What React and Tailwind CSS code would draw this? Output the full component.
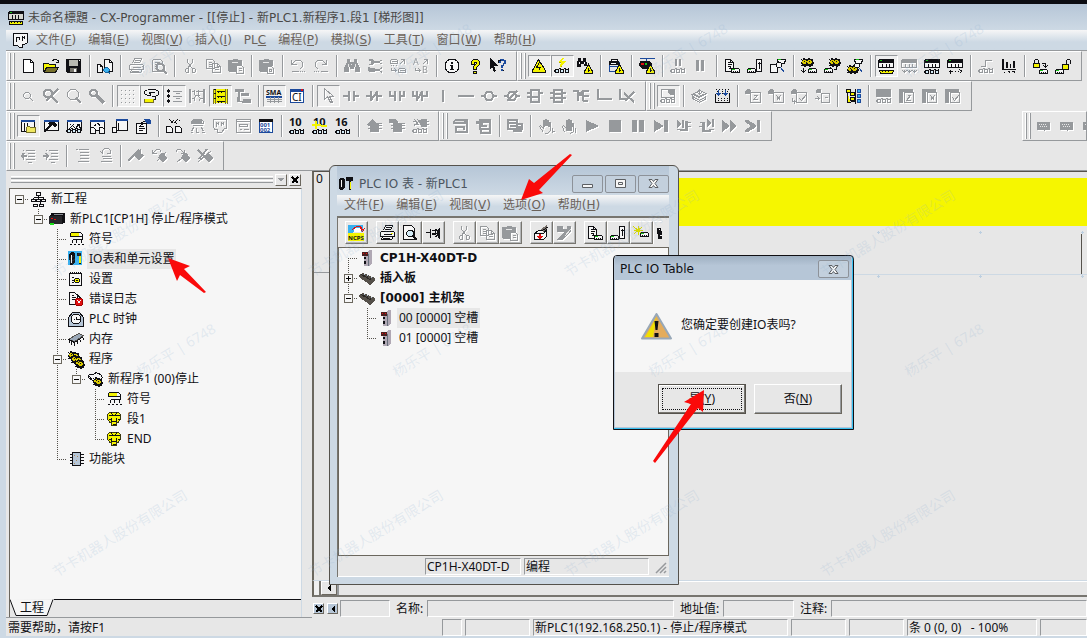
import React from 'react';
import clsx from 'clsx';

const G = '#96999c';
const K = '#101014';
const Y = '#f4f400';
const B = '#1c4a9c';
const C = '#38b0f0';
const R = '#e01010';
const W = '#f6f6f6';
const S = '#b6c6d7';

// icon parts: lines of one, two and three pixels, a filled area, a short caption
const line = (d, color = K, fill = 'none') => ({ type: 'line', d, color, fill });
const thick = (d, color = G, width = 2) => ({ type: 'thick', d, color, width });
const area = (d, color = K) => ({ type: 'area', d, color });
const label = (text, x, y, size, color = K, bold = false) => ({ type: 'label', text, x, y, size, color, bold });

// parts shared by several icons
const glasses = (c = K, y = 10) => [
  line(`M0 ${y + 3}v-1l1 -1M1 ${y + 1}h3v3h-3zM6 ${y + 1}h3v3h-3zM11 ${y + 1}h3v3h-3zM4 ${y}h2M9 ${y}h2M14 ${y}l1 1`, c, c === G ? 'none' : '#d4ecf8'),
];
const device = (x = 8, y = 10) => [
  line(`M${x} ${y + 1}l1 -1h6l1 1v3h-8z`, K, W),
  area(`M${x + 1} ${y + 1}h3v1h-3z`, '#18c018'),
  area(`M${x + 2} ${y + 3}h1v1h-1zM${x + 4} ${y + 3}h1v1h-1zM${x + 6} ${y + 3}h1v1h-1z`),
];
const warning = (x = 7, y = 6) => [
  line(`M${x + 4} ${y}l4 7v2h-8v-2z`, K, Y),
  line(`M${x + 4} ${y + 3}v4M${x + 3} ${y + 6}h2`),
];
const rack = (c = K) => [
  line('M0 4h15v5h-15zM4 5v3M8 5v3M11 5v3', c, c === G ? 'none' : W),
  area('M2 1h13l1 1v3h-16v-3z', c),
  area('M2 2h2v1h-2z', c === G ? G : '#18c018'),
];
const gear = (x, y) => [
  area(`M${x + 2} ${y}h2v1h2v1h1v2h1v2h-1v2h-2v1h-2v-1h-2v-2h-1v-2h1v-2h1z`),
  area(`M${x + 2} ${y + 2}h3v1h1v2h-1v1h-3v-1h-1v-2h1z`, '#d8c800'),
  area(`M${x + 3} ${y + 3}h1v1h-1zM${x} ${y + 1}h1v1h-1zM${x + 6} ${y + 1}h1v1h-1zM${x} ${y + 7}h1v1h-1z`),
];
const binoculars = (c = K) => [
  area('M3 1h3v3h4v-3h3v3l3 6v4h-5v-5h-1v2h-4v-2h-1v5h-5v-4l3 -6z', c),
  area('M4 6h1v3h-1zM11 6h1v3h-1zM7 6h1v1h-1z', c === G ? '#e7e7e7' : W),
];
const window1 = [line('M1 2h14v10h-14z', K, W), area('M1 2h15v2h-15z', B)];
const page = (c = K) => line('M1 1h5l3 3v9h-8zM6 1v3h3', c, c === G ? 'none' : W);
const stamp = [area('M0 6v-3l2 -2h2l2 2v3z', G), line('M5 4h10v10h-10z', G)];
const folderPage = [area('M0 1h4v14h-4z', G), area('M0 1h14v3h-14z', G), line('M5 4h9v10h-9z', G)];
const chip = [area('M4 5h9v9h-9zM2 7h2v1h-2zM2 10h2v1h-2zM13 7h3v1h-3zM13 10h3v1h-3zM13 5h3v1h-3z', G)];

const icons = {
  app: [
    line('M1 1h13l1 1v7h-15v-7z', K, '#d8d8d0'), area('M1 1h15v3h-15z'), area('M2 2h2v1h-2z', '#18c018'),
    line('M4 4v5M7 4v5M10 4v5'), line('M1 11h13v3h-13z', K, Y), area('M3 12h1v1h-1zM6 12h1v1h-1zM9 12h1v1h-1zM12 12h1v1h-1z'),
  ],
  section: [line('M1 1h14v9l-3 2h-2v3h-3l-2 -2h-4z', K, W), line('M4 4v5M7 4v3M10 3v5M12 3v3M4 5h3M10 5h2', K)],
  new: [line('M3 1h7l3 3v10h-10z', K, '#fff'), line('M10 1v3h3')],
  open: [
    line('M0 5h5l1 1h6v3h-9l-2 4h-1z', K, Y), line('M3 9h12l-3 5h-11z', K, '#77702a'), line('M9 2l2 -1h2l2 2M15 1v3h-3'),
  ],
  save: [area('M0 1h15v14h-14l-1 -1z'), area('M3 2h9v6h-9z', '#b8b8b0'), area('M4 10h7v4h-7z', '#77756c'), area('M8 11h2v3h-2z', W), area('M13 2h1v1h-1z', W)],
  compare: [
    line('M0 6h3l2 2v6h-5zM7 1h5l3 3v9h-8z', K, W), line('M3 6v2h2M12 1v3h3'),
    line('M8 9h2l2 2v1l-2 2h-2l-2 -2v-1z', '#16649c', C), line('M11 14l2 1', '#16649c'),
  ],
  print: [line('M4 5l2 -5h7l-2 5M6 2h5M5 4h6M2 6h12l1 1v4h-14v-4zM3 11l-1 3h10l2 -3M4 9h8M3 13h7M13 8h1', G)],
  preview: [line('M1 1h8l2 2v2M1 1v12h6M3 4h5M3 6h3M3 8h2M3 10h2', G), thick('M7 6h4l2 2v3l-2 2h-3l-2 -2v-3z'), thick('M12 12l4 4')],
  cut: [line('M5 0v4l5 6M10 0v4l-5 6M7 6h1M4 10h2v4h-2l-1 -1v-2zM10 10h2l1 1v2l-1 1h-2z', G)],
  copy: [line('M1 1h6l2 2v7h-8zM7 5h5l3 3v6h-8zM3 4h3M3 6h3M3 8h3M9 9h4M9 11h4M12 5v3h3', G)],
  paste: [area('M0 2h5v-1h5v1h4v5h-6v7h-7l-1 -1z', G), line('M8 7h5l2 2v6h-7zM10 10h3M10 12h3', G), area('M4 4h6v1h-6z', '#e7e7e7')],
  pasteSpecial: [area('M0 2h5v-1h5v1h4v6h-6v6h-7l-1 -1z', G), line('M8 8h4l2 2v5h-6zM10 11h2v2h-2z', G), area('M4 4h6v1h-6z', '#e7e7e7')],
  undo: [line('M1 1v5h5M1 6l4 -4h5l2 2v4l-3 3M1 13h7M9 13h1M11 13h1M13 13h1M2 5l3 -3', G)],
  redo: [line('M13 1v5h-5M13 6l-4 -4h-5l-2 2v4l3 3M0 13h1M2 13h1M4 13h1M7 13h7M12 5l-3 -3', G)],
  find: [binoculars(G)],
  // two wrenches lying over each other
  replaceTool: [area('M2 1h3l2 2h5l1 -1h2v1h-2v2h2v1h-2l-1 -1h-5l-2 2h-3v-1h2v-3h-2zM1 9h2v2h-2zM3 10h4l1 1h4l2 -2h1v2h-2v2h2v2h-1l-2 -2h-4l-1 1h-5l-1 -1v-2z', G)],
  swapDevice: [line('M0 2l1 -1h5l1 1v3h-7zM1 3h5M1 6v1M3 6v1M6 6v1M9 6l5 -5M10 1h4v4M8 11l1 -1h5l1 1v3h-7zM9 12h5M1 9v3h5M4 10l2 2l-2 2', G)],
  swapLetters: [label('A', 0, 7, 9, G), label('B', 9, 15, 9, G), line('M9 6l5 -5M10 1h4v4M2 9v3h5M5 10l2 2l-2 2', G)],
  info: [{ type: 'circle', cx: 8, cy: 8, r: 7, color: K }, area('M7 4h2v2h-2zM6 7h3v4h1v1h-4v-1h1v-3h-1z')],
  help: [line('M4 3l2 -2h4l2 2v3l-3 3v2h-3v-3l3 -3v-1h-2v2h-3zM6 13h3v2h-3z', K, Y)],
  whatsThis: [area('M0 0l8 8h-4l2 5l-2 1l-2 -5l-2 2z'), area('M8 2h2v-1h4v1h2v4h-2v2h-1v2h-2v-3h2v-2h1v-2h-3v2h-3zM11 11h2v2h-2z', B), line('M8 4v-2h2M12 12h1')],
  alarm: [line('M7 1l7 11v2h-13v-2z', K, Y), line('M8 4l-3 5h4l-2 3')],
  monitor: [line('M9 0l-4 4h4l-3 5', '#b0a800'), area('M8 0h2l-2 3h4l-6 6l1 -5h-3z', Y), glasses()],
  findAlarm: [area('M1 0h3v3h2v-3h3v3l2 5h-4v-2h-3v3h-4v-3z'), area('M2 4h1v2h-1zM7 4h1v2h-1z', W), warning()],
  printAlarm: [line('M3 1h6v3h-6z', K, W), line('M1 4h10v4h-10zM1 8v5h5', B), area('M1 3h10v4h-10z'), area('M3 5h5v1h-5z', W), warning()],
  plcAlarm: [line('M0 0h15M7 0v3', B), area('M1 3h10l2 3v5h-9l-4 -3z'), area('M2 5h3v2h-3z', R), area('M6 5h2v2h-2z', '#18c018'), warning()],
  pauseMonitor: [area('M5 1h2v7h-2zM9 1h2v7h-2z', G), glasses(G)],
  pause: [area('M3 2h3v11h-3zM8 2h3v11h-3z', G)],
  download: [page(), line('M3 4h2M3 6h4M3 8h3M4 10h3M6 9l3 2', K), device(7, 10)],
  upload: [line('M9 1h5v12h-5zM12 10v-6M10 6l2 -2l2 2', K, W), device(0, 10)],
  comparePlc: [line('M0 6h7v8h-7z', K, W), line('M7 1h8l-1 4h-6z', K, W), area('M8 1h3v1h-3z', '#18c018'), line('M7 4h3l1 1v3l-1 1h-3l-1 -1v-3z', K, W), line('M10 9l4 5', B)],
  toPlc: [gear(0, 0), gear(5, 0), line('M2 9v5M0 12l2 2l2 -2'), device(7, 10)],
  fromPlc: [gear(5, 0), gear(9, 0), line('M12 8v3h-3M6 9l-3 3'), device(0, 10)],
  plcCheck: [gear(0, 7), gear(4, 7), line('M7 1h8l-1 4h-6z', K, W), area('M9 1h3v1h-3z', '#18c018'), line('M8 5h3l1 1v2l-1 1h-3l-1 -1v-2z', K, W), line('M12 10l3 4', B)],
  rackEdit: [rack(), line('M1 12h14l-1 3h-12z', K, Y), area('M4 13h1v1h-1zM7 13h1v1h-1zM10 13h1v1h-1z')],
  rackDown: [rack(G), line('M3 11v3M1 12l2 2l2 -2M8 11v3M6 12l2 2l2 -2M13 11v3M11 12l2 2l2 -2', G)],
  rackMonitor: [rack(), glasses(K, 11)],
  rackArrow: [rack(), line('M1 13h4M3 11v4M7 13h1M10 13h1M12 11l2 2l-2 2M14 11v2')],
  step: [line('M2 8h5v-6h6', G), glasses(G)],
  wave: [area('M1 1h2v11h-2zM5 4h2v6h-2zM9 6h1v4h-1zM12 3h2v7h-2z'), line('M1 11h13M3 13v1M6 13h2v1M10 13h3v1')],
  lock: [line('M1 5h6v4h-6z', K, Y), line('M2 5v-3l1 -1h2l1 1v3M9 5h4v4M11 7l2 2l2 -2'), device(7, 11)],
  unlock: [line('M7 6h6v5h-6z', K, Y), line('M11 5v-3l1 -1h2l1 1v3'), device(0, 11)],

  zoomMini: [line('M5 4h3l2 2v2l-2 2h-3l-2 -2v-2zM9 9l4 4', G)],
  zoomCut: [thick('M3 2h4l2 2v3l-2 2h-4l-2 -2v-3z'), thick('M15 1l-12 12'), thick('M8 8l7 7')],
  zoomIn: [line('M4 1h5l3 3v4l-3 3h-5l-3 -3v-4z', G), thick('M10 10l5 5')],
  zoomFit: [thick('M3 2h3l2 2v2l-2 2h-3l-2 -2v-2z'), thick('M8 8l7 7', G, 3)],
  grid: [area([2, 6, 10, 14].map((y) => [1, 5, 9, 13].map((x) => `M${x} ${y}h1v1h-1z`).join('')).join(''), G)],
  comment: [line('M4 1h8l3 2v3l-3 2h-4M4 1l-3 2v2l3 2h3v-2h-2M12 8v3h-2M5 4h6', K, 'none'), area('M1 11h10v4h-10z', '#77702a'), area('M2 11h8v3h-8z', Y)],
  list: [area('M1 2h3v2h-3zM2 1h1v4h-1zM1 7h3v2h-3zM2 6h1v4h-1zM1 12h3v2h-3zM2 11h1v4h-1z'), line('M6 3h9M6 8h9M6 13h9M9 5h4M9 10h4', G)],
  rungs: [line('M0 0v14M1 0v14M14 0v14M15 0v14M2 3h3M5 1v5M9 1v5M9 3h5M6 3h2M2 10h3M6 8l-2 2l2 3M9 8l2 2l-2 3M11 10h3M5 7h5', G)],
  ladder: [area('M1 1h15v14h-15z', Y), line('M1 0v15M3 0v15M13 0v15M15 0v15', '#77702a'), line('M4 3h8M4 8h8M4 13h8M1 1h2M1 5h2M1 10h2'), line('M6 2v2M9 2v2M6 7v2M9 7v2M6 12v2M9 12v2')],
  outline: [area('M0 1h9v3h-9zM3 4h2v9h3v-2h8v4h-9v-1h-5zM6 5h8v3h-8z', G)],
  sma: [label('SMA', 0, 7, 7, K, true), area('M0 8h16v2h-16z', B), line('M0 11h15M0 13h15M4 8v6M8 8v6M12 8v6', G)],
  ci: [line('M1 1h13v13h-13z', B, '#fff'), area('M1 1h14v3h-14z', B), area('M12 1h2v2h-2z', R), label('CI', 3, 13, 10, K)],
  pointer: [line('M4 0v11l3 -3l3 6h2l-3 -6h4z', G)],
  contact: [thick('M0 8h5M6 3v10M11 3v10M11 8h5')],
  contactNot: [thick('M0 8h5M5 3v10M11 3v10M11 8h5'), thick('M11 4l-6 8')],
  contactOr: [thick('M1 3v5h4M6 3v10M11 3v10M15 3v5h-4')],
  contactOrNot: [thick('M1 3v5h4M5 3v10M10 3v10M15 3v5h-4'), thick('M10 4l-5 8')],
  vertical: [area('M7 2h2v12h-2z', G)],
  horizontal: [area('M0 7h16v2h-16z', G)],
  coil: [thick('M0 8h3l3 -4h4l3 4h3M3 8l3 4h4l3 -4')],
  coilNot: [thick('M0 8h3l3 -4h4l3 4h3M3 8l3 4h4l3 -4'), thick('M13 3l-10 10')],
  block: [thick('M4 2h8v12h-8zM0 5h4M12 5h4M4 9h8M0 9h4')],
  blockPins: [thick('M4 2h8v12h-8zM0 5h4M12 5h4M0 10h4M12 10h4M4 6h8M4 10h8')],
  branch: [thick('M0 3h5v10M5 8l5 -5M10 3v10M10 3h6M10 8h6M10 13h5M5 4l4 4')],
  corner: [thick('M2 1v10h14')],
  cornerCut: [thick('M1 1v10h8'), thick('M15 4l-9 9'), thick('M5 5l10 9')],
  monitorWindow: [line('M1 1h13v8h-13z', G), area('M8 2h6v5h-3l-3 -2z', G), glasses(G)],
  layers: [line('M1 6l7 -4l7 3l-7 4zM1 8l7 4l7 -4M1 10l7 4l7 -4M8 0v6M6 4l2 2l2 -2M1 6v4M3 6l5 2l5 -3', G)],
  compile: [line('M1 5v9h14v-9'), line('M1 1h1M4 1h1M7 1h1M10 1h1M13 1h1M2 3h1M7 3h1M12 3h1M1 5h1M7 5h1M14 5h1', K), area('M4 2h1v3h-1zM11 2h1v3h-1zM2 5h5l-2 3h-1zM9 5h5l-2 3h-1z', B), line('M3 10h1M6 10h1M9 10h1M12 10h1M3 12h1M6 12h1M9 12h1M12 12h1')],
  stampZ: [stamp, line('M8 7h4l-4 4h4', G)],
  stampX: [stamp, line('M8 7l4 5M12 7l-4 5', G)],
  stampCheck: [stamp, line('M8 10l2 2l4 -5M1 9v4h3M3 11v4', G)],
  stampArrow: [area('M2 5v-3l2 -1h2l1 1v3z', G), line('M7 5h8v9h-8zM0 10h5M3 8l2 2l-2 2M10 9h3', G)],
  map: [line('M1 1h4v3h-4zM2 4v10h3M5 4h4v3h-4zM5 9h4v3h-4zM5 13h4', K, Y), line('M10 0v15'), line('M12 1h3v3h-3zM12 6h3v3h-3zM12 11h3v3h-3z', B, C)],
  screenMonitor: [area('M0 1h15v8h-15z', G), glasses(G)],
  folderZ: [folderPage, line('M8 7h3l-4 5h4', G)],
  folderX: [folderPage, line('M8 7l4 5M12 7l-4 5', G)],
  folderCheck: [folderPage, line('M7 9l2 3l4 -5', G)],

  workspace: [line('M1 2h13v11h-13z', K, W), area('M1 2h14v2h-14z', B), line('M4 4v9M7 4v3'), line('M6 9l1 -1h2l1 1h5v5h-9z', '#77702a', '#f0e860')],
  output: [window1, area('M4 5l3 -1h4l3 3l-2 2l-3 -2l-6 7h-2v-2l5 -5z')],
  watch: [window1, line('M3 6h1M6 6h1M10 6h1M12 6h1M2 11l4 -4l3 3l3 -4l2 4'), glasses()],
  crossRef: [window1, line('M1 9h3l2 2v4h-5zM10 9h3l2 2v4h-5z', K, W), line('M5 7l2 -1M9 6l2 1M7 5h2')],
  local: [line('M4 1h11v11h-11z', K, W), area('M4 1h12v2h-12z', B), line('M0 9h4v5h-4z', K, W), line('M6 4v7')],
  properties: [line('M1 5h10v10h-10z', K, W), line('M3 8h5M3 10h6M3 12h4M5 5l5 -3l4 2'), area('M9 1h5l2 2v3h-4z', B), line('M5 7l4 -3')],
  crossTool: [line('M0 8h4l2 2v4h-6zM9 8h4l2 2v4h-6z', K, W), line('M4 5l3 -3M7 5l4 -4M4 2l3 3M9 4l2 2M2 1h1M12 2h1')],
  plcTree: [line('M2 3l2 -2h8l2 2v2h-12zM3 7h10M4 9l-2 4M7 9v4M12 9l2 4', G), area('M3 2h10v3h-10z', G), line('M1 14h2M6 14h3M12 14h3', G)],
  ladderView: [line('M1 1h13v9h-2l-3 4h-4v-3h-3l-1 -3zM4 3v5M6 3v3M9 3v4M11 3v3M4 5h2M9 5h2', G)],
  formView: [line('M1 1h14v13h-14zM1 3h14M4 6h8v2h-8zM4 11h2M8 11h5', G)],
  address: [line('M1 1h13v13h-13z', B, '#fff'), area('M1 1h14v3h-14z'), label('001', 2, 9, 6, B, true), label('002', 2, 14, 6, B, true)],
  ten: [label('10', 0, 8, 11, K, true), glasses(K, 11)],
  tenSigned: [label('10', 1, 8, 11, K, true), area('M0 6h9v2h-9zM3 3h2v8h-2zM9 7h6v2h-6z', Y), glasses(K, 11)],
  sixteen: [label('16', 0, 8, 11, K, true), glasses(K, 11)],
  chipUp: [chip, area('M0 7l6 -6l6 6z', G)],
  chipDown: [chip, area('M0 1h6l3 3v3h2l-4 4l-4 -4h2l-2 -2h-3z', G)],
  chipMonitor: [line('M2 1l5 6M5 1l4 5M9 1h5v7h-5zM0 3h3M1 6h4M14 3h2M14 6h2M1 8l3 -3', G), area('M7 2h7v6h-5z', G), glasses(G)],
  trace: [area('M2 1h12l1 1v4h-15v-3z', G), area('M2 3h9v1h-9z', '#e7e7e7'), thick('M14 5v9h-11v-5h8v3')],
  traceStack: [area('M3 1h12v2h-12zM0 3h4v3h-4z', G), thick('M4 3v8h10v-7h-8v4h5M5 11v4h9v-4')],
  transfer: [thick('M1 2h9v9h-9zM1 5h9M3 8h6'), thick('M10 6h5v6M6 13h9'), area('M11 8h4v5h-4z', G)],
  hand: [line('M5 14l-4 -6l1 -1l3 3v-8h1v6M7 7v-6h1v6M9 7v-5h1v6M11 8v-4h1v8l-3 3h-3M14 9v5M13 13h3', G)],
  handStop: [line('M3 14l-2 -6l1 -1l3 3v-8h1v6M7 7v-6h1v6M9 7v-5h1v6M11 8v-3h1v8l-3 2M14 9v5', G), area('M5 6h6v7h-6z', G)],
  play: [area('M2 2l13 6l-13 6z', G)],
  stop: [area('M2 2h12v12h-12z', G)],
  pauseBig: [area('M2 2h5v12h-5zM9 2h5v12h-5z', G)],
  stepNext: [area('M1 2l10 6l-10 6zM11 2h4v12h-4z', G)],
  stepIn: [area('M1 2l4 4l-4 4zM6 2h2v8h-2zM9 3h3v10h-8v-2h5zM12 4h3v1h-3zM12 8h3v1h-3zM1 11h3v1h-3z', G)],
  stepOut: [area('M1 4h5v8h6v2h-9v-9h-2zM8 1l4 4l-4 4zM13 1h2v8h-2zM0 8h3v1h-3zM10 11h5v1h-5z', G)],
  fast: [area('M0 2l8 6l-8 6zM8 2l7 6l-7 6z', G)],
  scanEnd: [area('M0 2h3l8 5v2l-8 5h-3v-2l6 -4l-6 -4zM12 2h3v12h-3z', G)],
  dither: [area('M1 4h13v8h-5l-1 1l-1 -1h-6z', G), area('M3 6h1v1h-1zM5 6h1v1h-1zM7 6h1v1h-1zM9 6h1v1h-1zM4 8h1v1h-1zM6 8h1v1h-1zM8 8h1v1h-1zM10 8h1v1h-1z', '#e7e7e7')],
  outdent: [line('M5 2h9M7 5h7M7 8h7M5 11h9M7 14h4M2 2h1M1 5h3M2 11h1', G), area('M0 8l4 -3v2h3v2h-3v2z', G)],
  indent: [line('M5 2h9M7 5h7M7 8h7M5 11h9M7 14h4M2 2h1M1 5h2M2 11h1', G), area('M7 8l-4 -3v2h-3v2h3v2z', G)],
  format: [line('M1 1h2M4 1h10M5 4h9M5 7h9M5 10h9M3 13h11', G)],
  unformat: [line('M5 5l-2 -2M5 5v-3l2 -2h4l2 2v3h-4M4 8h9M5 10h9M3 13h11', G)],
  flag: [thick('M0 13l11 -11'), area('M6 6l7 -5v5l3 1l-5 6l-3 -3z', G)],
  flagPrev: [line('M1 1v4h4M1 5l4 -4h3l2 3M5 13l9 -9', G), area('M10 5h3l3 5l-4 4l-5 -4z', G)],
  flagNext: [line('M10 1v4h-4M10 5l-4 -4h-3l-2 3M3 13l9 -7', G), area('M10 5h3l3 5l-4 4l-5 -4z', G)],
  flagClear: [thick('M1 2l9 9'), thick('M10 1l-8 10'), line('M1 13l13 -11', G), area('M10 6h3l3 4l-4 4l-5 -4z', G)],

  ncps: [area('M0 0h5v16h-5zM5 0h10v7h-10z', C), area('M6 3h7v4h-7z', '#fff'), line('M4 4l4 -3h4l2 4M12 3l2 3l2 -3', R), area('M0 8h16v8h-16z', Y), label('NCPS', 0, 15, 6, K, true)],
  printOn: [line('M4 5l2 -5h7l-2 5M6 2h5M5 4h6M2 6h12l1 1v4h-14v-4zM3 11l-1 3h10l2 -3M4 9h8M3 13h7', K, W), area('M12 8h2v1h-2z', Y)],
  previewOn: [line('M1 0h8l3 3v11h-11z', K, W), line('M6 5h4l1 2v2l-1 2h-4l-2 -2v-2z', K, '#d4ecf8'), thick('M11 11l4 4', K)],
  pin: [line('M0 7h5M5 3v9M6 5h4v4h-4M10 4l2 1v5l-2 1M14 2v11M12 6h2M6 8h5M13 3v9')],
  toUnit: [line('M1 8h9l3 -4v7l-3 3h-9zM1 8l4 -3h8', K, W), area('M8 4l6 -4l1 3l-5 4z', '#77706a'), line('M9 5l6 -4'), area('M6 9h2v2h2l-3 4l-3 -4h2z', R)],
  wrench: [area('M1 1h6v3h4v-3h4v5l-9 9h-5l7 -8h-7z', G), line('M8 11l6 -7', '#e7e7e7')],
  newDevice: [line('M0 1l9 8M5 0v9M9 1l-8 7M0 5h9', '#d8d800'), device(7, 7)],
  moreDevice: [area('M0 3h4v3h3v8h-6v-5h-1z'), area('M2 4h1v1h-1zM3 10h3v1h-3z', W)],

  network: [line('M6 1h4v3h-4zM8 4v2M3 6h10M3 6v2M13 6v2M1 8h4v2h-4zM11 8h4v2h-4zM6 8h4v2h-4zM8 6v2M5 12v1M10 10v3M3 13h4v2h-4zM9 13h4v2h-4z', K, W)],
  plc: [line('M2 2h13v9h-13z', K, K), area('M0 5h13v8h-13z', '#26262a'), line('M0 5l3 -3h12v8l-3 3'), line('M4 3h9', '#8a8e94'), area('M2 7h2v1h-2zM5 8h2v1h-2z', R), area('M1 12h4v2h-4z', '#18e018')],
  symbols: [line('M2 2l2 -1h8l2 2v2h-12zM4 8h9v3M4 8v3M8 8v3M1 13h2M5 13h2M9 13h2M13 13h2', K, W), area('M3 2h8v3h-8z', Y), line('M14 5v3')],
  ioTable: [area('M0 0h14v14h-14z', C), area('M1 3l2 -2h3l1 2v8l-2 3h-3z', K), area('M3 4h1v8h-1z', W), area('M9 2h4v11h-2v-8h-2z', K), area('M11 5h2v7h-2z', Y)],
  settings: [line('M1 2h12v12h-12z', K, W), line('M2 0v2M4 0v2M6 0v2M8 0v2M10 0v2M12 0v2M3 6h2M3 9h2M3 11h2'), line('M7 7h3l1 1v2l-1 1h-3l-1 -1v-2z', K, Y), area('M8 9h2v1h-2z')],
  errorLog: [line('M1 1h5l3 3v9h-8z', K, W), line('M3 4h2M3 6h4M3 8h3M9 3l4 5'), { type: 'circle', cx: 11, cy: 11, r: 4, color: '#a00000', fill: R }, line('M9 9l3 3M12 9l-3 3', W)],
  clock: [line('M0 15v-9l4 -5h7l4 5v9z', K, S), { type: 'circle', cx: 8, cy: 8, r: 5, color: K, fill: W }, line('M8 5v3h3M5 8h1M8 11v1')],
  memory: [line('M0 8l10 -6l5 2l-9 6z', '#55524c', '#9aa8b8'), line('M1 9v2M3 10v3M6 11v3M9 9v3M12 8v2M15 6v2M0 8l6 3l9 -6')],
  gears: [gear(0, 0), gear(4, 1), gear(3, 4), gear(7, 5), gear(7, 8), gear(9, 9), line('M5 3h1M8 8h1M11 11h1', Y)],
  program: [line('M2 3h4l2 -2l5 2l2 3l-3 3h-7l-4 -3v-2z', K, W), gear(6, 6), gear(8, 7), line('M0 5h2M4 8l-1 -2M12 1v2M8 0v2')],
  steps: [line('M1 3l2 -2h9l2 2v5l-2 2v1h-2v3h-5v-3h-2v-1l-2 -2z', '#3c3810', Y), line('M2 4h11M5 1l1 3M10 1l-1 3M5 6v4h5v-4M6 13h3M2 8h2M11 8h2')],
  block2: [line('M4 1h8v13h-8z', K, S), line('M1 3h3M1 6h3M1 9h3M1 12h3M12 3h3M12 6h3M12 9h3M12 12h3'), area('M6 4h1v1h-1zM9 5h1v1h-1zM8 9h1v1h-1zM6 12h1v1h-1z', '#b08858')],
  unit: [area('M3 2h5l2 -2h3v13l-3 3h-5v-10h-2z', '#b0a8b4'), area('M3 2h6v4h-6z', '#4a2020'), area('M4 3h1v1h-1zM7 3h1v1h-1z', R), area('M5 7h2v2h-2zM5 11h2v3h-2z'), line('M9 3v12', '#66707c')],
  board: [area('M0 5l4 -2l12 5v3l-5 4l-11 -8z', '#55504a'), line('M2 4l10 6M5 5l-1 2M8 6l-1 2M11 8l-1 2', '#2a2826'), area('M5 4h1v1h-1zM8 5h1v1h-1zM12 7h1v1h-1z', S)],
  ioWindow: [
    area('M1 3l2 -1h3l1 2v7l-2 3h-3l-1 -3z'), area('M3 4h1v7h-1z', W), area('M8 1h7v4h-2v9h-2v-9h-3z'), area('M12 6h1v7h-1z', Y),
  ],
};

const menus = [['文件', 'F'], ['编辑', 'E'], ['视图', 'V'], ['插入', 'I'], ['PL', 'C'], ['编程', 'P'], ['模拟', 'S'], ['工具', 'T'], ['窗口', 'W'], ['帮助', 'H']];
const ioMenus = [['文件', 'F'], ['编辑', 'E'], ['视图', 'V'], ['选项', 'O'], ['帮助', 'H']];

// "|" is a separator, a leading "*" is a pressed button
const toolbars = [
  [
    'new open save | compare | print preview | cut copy paste | pasteSpecial | undo redo | find replaceTool swapDevice swapLetters | info help whatsThis',
    '*alarm *monitor findAlarm | printAlarm | plcAlarm | pauseMonitor pause | download upload comparePlc | toPlc fromPlc plcCheck | *rackEdit rackDown rackMonitor rackArrow | step wave | lock unlock',
  ],
  [
    'zoomMini zoomCut zoomIn zoomFit | *grid *comment *list rungs *ladder outline | *sma ci | *pointer contact contactNot contactOr contactOrNot vertical horizontal coil coilNot block blockPins branch corner cornerCut',
    '*monitorWindow | layers compile | stampZ stampX stampCheck stampArrow | map | screenMonitor folderZ folderX folderCheck',
  ],
  [
    '*workspace output watch crossRef local properties | crossTool plcTree ladderView formView address | ten tenSigned sixteen | chipUp chipDown chipMonitor',
    'trace traceStack | transfer | hand handStop play stop pauseBig stepNext stepIn stepOut fast scanEnd',
  ],
  ['outdent indent | format unformat | flag flagPrev flagNext flagClear'],
];

const ioToolbar = [['ncps'], ['printOn', 'previewOn', 'pin'], ['cut', 'copy', 'paste'], ['toUnit', 'wrench'], ['download', 'upload', 'newDevice']];

// one character per column: space, | line through, T tee, L last, F first;
// boxes: a top, b no line below, - and + line on both sides
const projectTree = [
  { cols: 'a', icon: 'network', text: '新工程' },
  { cols: ' b', icon: 'plc', text: '新PLC1[CP1H] 停止/程序模式' },
  { cols: '  T', icon: 'symbols', text: '符号' },
  { cols: '  T', icon: 'ioTable', text: 'IO表和单元设置', selected: true },
  { cols: '  T', icon: 'settings', text: '设置' },
  { cols: '  T', icon: 'errorLog', text: '错误日志' },
  { cols: '  T', icon: 'clock', text: 'PLC 时钟' },
  { cols: '  T', icon: 'memory', text: '内存' },
  { cols: '  -', icon: 'gears', text: '程序' },
  { cols: '  |b', icon: 'program', text: '新程序1 (00)停止' },
  { cols: '  | T', icon: 'symbols', text: '符号' },
  { cols: '  | T', icon: 'steps', text: '段1' },
  { cols: '  | L', icon: 'steps', text: 'END' },
  { cols: '  L', icon: 'block2', text: '功能块' },
];

const ioTree = [
  { cols: 'F', icon: 'unit', text: 'CP1H-X40DT-D', bold: true },
  { cols: '+', icon: 'board', text: '插入板', bold: true },
  { cols: 'b', icon: 'board', text: '[0000] 主机架', bold: true },
  { cols: ' T', icon: 'unit', text: '00 [0000] 空槽', selected: true },
  { cols: ' L', icon: 'unit', text: '01 [0000] 空槽' },
];

const marks = [0, 1, 2, 3].flatMap((n) => [
  { x: 58 + n * 256, y: 268, text: '节卡机器人股份有限公司' },
  { x: 58 + n * 256, y: 568, text: '节卡机器人股份有限公司' },
  { x: 142 + n * 256, y: 68, text: '杨乐平 | 6748' },
  { x: 142 + n * 256, y: 368, text: '杨乐平 | 6748' },
]);

const Icon = ({ name, className }) => {
  const parts = icons[name].flat();
  const dim = parts.every((p) => p.color === G || p.color === '#e7e7e7');
  return (
    <svg
      viewBox="0 0 16 16"
      shapeRendering="crispEdges"
      aria-hidden="true"
      className={clsx('h-4 w-4 shrink-0 overflow-visible', dim && 'drop-shadow-[1px_1px_0_#ffffff]', className)}
    >
      {parts.map((p, i) => {
        if (p.type === 'line') return <path key={i} d={p.d} stroke={p.color} fill={p.fill} transform="translate(.5 .5)" />;
        if (p.type === 'thick') return <path key={i} d={p.d} stroke={p.color} fill="none" strokeWidth={p.width} />;
        if (p.type === 'area') return <path key={i} d={p.d} fill={p.color} />;
        if (p.type === 'circle') return <circle key={i} cx={p.cx} cy={p.cy} r={p.r} stroke={p.color} fill={p.fill || W} />;
        return (
          <text key={i} x={p.x} y={p.y} fontSize={p.size} fill={p.color} fontWeight={p.bold ? 700 : 400}>
            {p.text}
          </text>
        );
      })}
    </svg>
  );
};

const Menu = ({ items, className }) => (
  <nav className={clsx("flex items-center font-['DejaVu_Sans','Noto_Sans_CJK_SC',sans-serif] text-[#6b625a]", className)}>
    {items.map(([name, key]) => (
      <button key={name} className="px-[6px] whitespace-nowrap">
        {name}
        {name === 'PL' ? <u>{key}</u> : <>(<u>{key}</u>)</>}
      </button>
    ))}
  </nav>
);

const Gripper = () => (
  <div className="flex w-[10px] shrink-0 gap-[2px] py-px pl-[2px]">
    <div className="w-[2px] border-r border-[#96999c] bg-white" />
    <div className="w-[2px] border-r border-[#96999c] bg-white" />
  </div>
);

const Toolbar = ({ items, className }) => (
  <div role="toolbar" className={clsx('flex h-[30px] shrink-0 overflow-hidden border border-t-white border-r-[#96999c] border-b-[#96999c] border-l-white pr-[6px]', className)}>
    <Gripper />
    <div className="flex items-center">
      {items.split(' ').map((item, i) => {
        if (item === '|') return <div key={i} className="mx-[3px] h-[22px] w-[2px] border-l border-[#96999c] bg-white" />;
        const pressed = item[0] === '*';
        const name = pressed ? item.slice(1) : item;
        return (
          <button
            key={i}
            aria-label={name}
            className={clsx(
              'flex h-[22px] w-[23px] items-center justify-center border pr-px',
              pressed ? 'border-t-[#96999c] border-r-white border-b-white border-l-[#96999c] bg-[#efefef]' : 'border-transparent'
            )}
          >
            <Icon name={name} />
          </button>
        );
      })}
    </div>
  </div>
);

const Branch = ({ kind }) => {
  const up = '|TLb-+'.includes(kind);
  const down = '|TF-+'.includes(kind);
  const right = 'TLFab-+'.includes(kind);
  const box = 'ab-+'.includes(kind);
  return (
    <svg viewBox="0 0 19 20" className="h-5 w-[19px] shrink-0" shapeRendering="crispEdges" aria-hidden="true">
      {kind !== ' ' && (
        <g stroke="#55524c" fill="none" strokeDasharray="1 1">
          {up && <path d="M9.5 0v10" />}
          {down && <path d="M9.5 10v10" />}
          {right && <path d="M9 10.5h10" />}
        </g>
      )}
      {box && (
        <g stroke="#6b675e">
          <path d="M5.5 6.5h8v8h-8z" fill="#f6f6f6" />
          <path d={kind === '+' ? 'M7 10.5h5M9.5 8v5' : 'M7 10.5h5'} stroke="#000" />
        </g>
      )}
    </svg>
  );
};

const Tree = ({ rows }) => (
  <ul>
    {rows.map((row, i) => (
      <li key={i} className="flex h-5 items-center">
        {row.cols.split('').map((kind, n) => <Branch key={n} kind={kind} />)}
        <Icon name={row.icon} className="mr-[3px] ml-px" />
        <span
          className={clsx(
            'h-5 px-[2px] leading-5 whitespace-nowrap',
            row.bold && "font-['DejaVu_Sans','Noto_Sans_CJK_SC',sans-serif] font-bold",
            row.selected && 'bg-[#e7e7e7]'
          )}
        >
          {row.text}
        </span>
      </li>
    ))}
  </ul>
);

const Cell = ({ children, className }) => (
  <div className={clsx('h-[17px] overflow-hidden border border-t-[#96999c] border-r-white border-b-white border-l-[#96999c] px-px leading-[15px] whitespace-nowrap', className)}>
    {children}
  </div>
);

const Field = ({ id, className }) => (
  <input id={id} className={clsx('h-[17px] min-w-0 border border-t-[#96999c] border-r-white border-b-white border-l-[#96999c] bg-transparent px-1 outline-none', className)} />
);

const CaptionButton = ({ name, children }) => (
  <button aria-label={name} className="flex h-[18px] w-[31px] items-center justify-center rounded-[2px] border border-[#8d9299] bg-[#c3d0dd]">
    <svg viewBox="0 0 13 11" className="h-[11px] w-[13px]" aria-hidden="true">{children}</svg>
  </button>
);

const closeGlyph = (
  <path d="M2 1.500h3l1.500 2l1.500 -2h3l-3 4l3 4h-3l-1.500 -2l-1.500 2h-3l3 -4z" fill="#f6f6f6" stroke="#5c5f63" />
);

const SmallButton = ({ name, children, className }) => (
  <button aria-label={name} className={clsx('flex items-center justify-center border border-t-white border-r-[#6b675e] border-b-[#6b675e] border-l-white', className)}>
    <svg viewBox="0 0 8 8" className="h-2 w-2" shapeRendering="crispEdges" aria-hidden="true">{children}</svg>
  </button>
);

const cross = <path d="M1 1l6 6M7 1l-6 6" stroke="#000" strokeWidth="2" />;
const leftArrow = <path d="M6 0v8l-4 -4z" />;

const ProjectPanel = () => (
  <aside className="flex w-[306px] shrink-0 flex-col border-b border-[#96999c] bg-[#e7e7e7]">
    <div className="flex h-[17px] items-center gap-[2px] pr-[11px] pl-[5px]">
      <div className="flex flex-1 flex-col gap-px">
        <div className="h-[3px] border-t border-b border-t-white border-b-[#96999c]" />
        <div className="h-[3px] border-t border-b border-t-white border-b-[#96999c]" />
      </div>
      <SmallButton name="折叠" className="h-3 w-3"><path d="M1 2h6l-3 4z" fill={G} /></SmallButton>
      <SmallButton name="关闭" className="h-3 w-3">{cross}</SmallButton>
    </div>
    <div className="mr-[10px] ml-[3px] flex flex-1 flex-col border-t border-r border-l border-t-[#6b675e] border-r-[#cdd9e4] border-l-[#6b675e] bg-[#f6f6f6]">
      <Tree rows={projectTree} />
      <div className="mt-auto flex h-[18px] bg-[#e7e7e7]">
        <button className="relative w-[44px]">
          <svg viewBox="0 0 44 18" className="absolute inset-0 h-[18px] w-[44px]" aria-hidden="true">
            <path d="M0 0l6 16.500h31l6 -16z" fill="#f6f6f6" />
            <path d="M0 .5l6 16h31l6 -16" fill="none" stroke="#101014" />
          </svg>
          <span className="relative">工程</span>
        </button>
        <div className="flex-1 border-t border-[#101014]" />
      </div>
    </div>
  </aside>
);

const GridMarks = () => (
  <div className="flex justify-end gap-[99px] pr-[3px]">
    {[0, 1, 2].map((n) => (
      <svg key={n} viewBox="0 0 3 3" className="h-[3px] w-[3px]" shapeRendering="crispEdges" aria-hidden="true">
        <path d="M0 1h3v1h-3zM1 0h1v3h-1z" fill="#bdcfe0" />
      </svg>
    ))}
  </div>
);

const LadderSection = () => (
  <section className="flex min-w-0 flex-1 flex-col">
    <div className="flex flex-1 border-t border-l-2 border-t-[#55524c] border-l-[#6b675e]">
      <div className="w-[16px] border-r border-[#96999c]">
        <div className="h-[101px] border-b border-[#96999c] pl-[2px] leading-[14px]">0</div>
      </div>
      <div className="flex-1 pt-[6px]">
        <div className="h-[48px] bg-[#f6f600]" />
        <div className="flex h-[49px] flex-col border-b border-[#cdd9e4] pt-[5px]">
          <GridMarks />
          <div className="mr-[5px] flex-1 border-r border-[#55524c]" />
        </div>
        <GridMarks />
      </div>
    </div>
    <div className="flex h-[17px] border-t border-b-2 border-l-2 border-t-[#cdd9e4] border-b-[#77756f] border-l-[#6b675e]">
      <div className="w-[7px] border-r-2 border-[#77756f] bg-[#f0f0f0]" />
      <SmallButton name="向左滚动" className="w-4">{leftArrow}</SmallButton>
      <div className="flex-1 border-t border-l-2 border-t-white border-l-[#96999c]" />
    </div>
    <form className="flex h-[21px] items-center pt-[2px] whitespace-nowrap" onSubmit={(e) => e.preventDefault()}>
      <SmallButton name="关闭" className="mr-[3px] ml-px h-[11px] w-[11px] bg-[#b6c6d7]">{cross}</SmallButton>
      <SmallButton name="上一个" className="mr-[2px] h-[11px] w-[11px] bg-[#b6c6d7]">{leftArrow}</SmallButton>
      <Field id="row" className="w-[50px]" />
      <label htmlFor="name" className="w-[37px] pl-[6px]">名称:</label>
      <Field id="name" className="w-[247px]" />
      <label htmlFor="value" className="w-[49px] pl-[6px]">地址值:</label>
      <Field id="value" className="w-[71px]" />
      <label htmlFor="note" className="w-[37px] pl-[6px]">注释:</label>
      <Field id="note" className="flex-1" />
    </form>
  </section>
);

const StatusBar = () => (
  <footer className="flex h-5 shrink-0 items-center gap-[3px] border-b-2 border-[#cdd9e4] pt-px">
    <div className="flex-1 pl-[2px]">需要帮助，请按F1</div>
    <Cell className="w-[20px]" />
    <Cell className="w-[65px]" />
    <Cell className="w-[255px]">新PLC1(192.168.250.1) - 停止/程序模式</Cell>
    <Cell className="w-[55px]" />
    <Cell className="w-[55px]" />
    <Cell className="w-[130px]">条 0 (0, 0) &nbsp;&nbsp;- 100%</Cell>
    <Cell className="w-[47px]" />
  </footer>
);

const IoWindow = () => (
  <section className="absolute top-[165px] left-[329px] flex h-[420px] w-[350px] flex-col rounded-t-[6px] border border-[#55524c] bg-[#cdd9e4] pr-[9px] pb-[7px] pl-[7px]">
    <header className="flex h-[29px] shrink-0 items-center gap-[2px] bg-linear-to-b from-[#b6c6d7] to-[#cdd9e4] pt-[6px]">
      <Icon name="ioWindow" className="mr-[3px] ml-px" />
      <h2 className="flex-1 font-['DejaVu_Sans','Noto_Sans_CJK_SC',sans-serif] text-[#4c5560]">PLC IO 表 - 新PLC1</h2>
      <CaptionButton name="最小化"><path d="M1.500 6.500h10v3h-10z" fill="#f6f6f6" stroke="#5c5f63" /></CaptionButton>
      <CaptionButton name="最大化"><path d="M1.500 1.500h10v8h-10zM4.500 4.500h4v2h-4z" fill="#f6f6f6" stroke="#5c5f63" /></CaptionButton>
      <CaptionButton name="关闭">{closeGlyph}</CaptionButton>
    </header>
    <Menu items={ioMenus} className="h-[19px] shrink-0 bg-linear-to-b from-[#f6f6f6] to-[#cdd9e4] to-60% pl-px" />
    <div className="mt-[2px] flex min-h-0 flex-1 flex-col border-t-2 border-l border-t-[#77756f] border-l-[#77756f] bg-[#e7e7e7]">
      <div role="toolbar" className="flex h-[29px] shrink-0 items-center gap-2 overflow-hidden pl-[7px]">
        {ioToolbar.map((group, i) => (
          <div key={i} className="flex shrink-0">
            {group.map((name) => (
              <button key={name} aria-label={name} className="flex h-[23px] w-[23px] items-center justify-center border border-t-white border-r-[#77756f] border-b-[#77756f] border-l-white pr-px shadow-[inset_-1px_-1px_0_#b4b6b8]">
                <Icon name={name} />
              </button>
            ))}
            {i === 4 && (
              <button aria-label="moreDevice" className="flex h-[23px] w-[9px] items-center overflow-hidden border-t border-l border-white pl-[3px]">
                <Icon name="moreDevice" />
              </button>
            )}
          </div>
        ))}
      </div>
      <div className="flex-1 border border-[#6b675e] bg-[#f6f6f6]">
        <Tree rows={ioTree} />
      </div>
      <div className="flex h-[21px] shrink-0 items-center gap-[3px] border-b border-white pr-px">
        <div className="flex-1" />
        <Cell className="w-[96px]">CP1H-X40DT-D</Cell>
        <Cell className="w-[125px]">编程</Cell>
        <svg viewBox="0 0 16 16" className="h-4 w-4" aria-hidden="true">
          <path d="M4 15l10 -10M8 15l6 -6M12 15l2 -2" stroke="#96999c" strokeWidth="1.500" />
        </svg>
      </div>
    </div>
  </section>
);

const ConfirmDialog = () => (
  <section role="dialog" aria-labelledby="confirm-title" className="absolute top-[255px] left-[613px] flex h-[175px] w-[241px] flex-col rounded-t-[4px] border border-[#101014] bg-[#b6c6d7] pr-[2px] pb-[2px] pl-px shadow-[inset_-1px_-1px_0_#38c0f0]">
    <header className="flex h-[24px] shrink-0 items-center justify-between bg-linear-to-b from-[#9fb0c2] to-[#b6c6d7] to-40% pt-[2px] pr-[2px] pl-[5px]">
      <h2 id="confirm-title" className="font-['DejaVu_Sans','Noto_Sans_CJK_SC',sans-serif]">PLC IO Table</h2>
      <CaptionButton name="关闭">{closeGlyph}</CaptionButton>
    </header>
    <div className="flex h-[92px] shrink-0 items-center gap-[9px] bg-[#f6f6f6] pl-[26px]">
      <svg viewBox="0 0 31 27" className="h-[27px] w-[31px]" aria-hidden="true">
        <path d="M15.500 1L30 25.500H1z" fill="#e4ac5c" stroke="#98a8b8" strokeWidth="2" strokeLinejoin="round" />
        <path d="M15.500 4L9 16l-5 8h8l2 -12z" fill="#f0e000" />
        <path d="M13.500 8h4l-1 9h-2zM13.500 20h4v4h-4z" fill="#101014" />
      </svg>
      <p className="pb-[3px]">您确定要创建IO表吗?</p>
    </div>
    <div className="flex flex-1 justify-end gap-2 bg-[#e7e7e7] pt-3 pr-[9px]">
      <button className="h-[30px] w-[88px] border border-[#55524c] p-[3px] shadow-[inset_-1px_-1px_0_#77756f,inset_1px_1px_0_#ffffff]">
        <span className="flex h-full items-center justify-center border border-dotted border-[#101014]">是(<u>Y</u>)</span>
      </button>
      <button className="h-[30px] w-[88px] border border-t-white border-r-[#6b675e] border-b-[#6b675e] border-l-white shadow-[inset_-1px_-1px_0_#96999c]">
        否(<u>N</u>)
      </button>
    </div>
  </section>
);

const Arrows = () => (
  <svg className="pointer-events-none absolute inset-0 h-full w-full" fill="#fa0a0a" aria-hidden="true">
    <path d="M521 200L529 179L534 183L570 154L572 155L539 190L543 193Z" />
    <path d="M168 258L190 266L184 269L206 292L204 293L180 275L177 281Z" />
    <path d="M704 390L703 412L698 408L655 463L653 461L691 404L684 402Z" />
  </svg>
);

const Watermark = () => (
  <div className="pointer-events-none absolute inset-0 overflow-hidden" aria-hidden="true">
    {marks.map((m, i) => (
      <span
        key={i}
        className="absolute origin-bottom-left -rotate-[31deg] text-[14px] whitespace-nowrap text-[#8fb0d0]/20"
        style={{ left: m.x, top: m.y - 4 }}
      >
        {m.text}
      </span>
    ))}
  </div>
);

export default function App() {
  return (
    <div className="relative flex h-screen w-full flex-col overflow-hidden bg-[#e7e7e7] font-['Noto_Sans','Noto_Sans_CJK_SC',sans-serif] text-[12px] leading-4 text-[#101014]">
      <div className="h-1 shrink-0 bg-[#0c0c12]" />
      <header className="flex h-[26px] shrink-0 items-center gap-1 bg-linear-to-b from-[#b6c6d7] to-[#cdd9e4] pt-[2px] pl-2 text-[#4a4846]">
        <Icon name="app" />
        <h1 className="font-['DejaVu_Sans','Noto_Sans_CJK_SC',sans-serif]">未命名標題 - CX-Programmer - [[停止] - 新PLC1.新程序1.段1 [梯形图]]</h1>
      </header>
      <div className="flex min-h-0 flex-1 flex-col border-l-[6px] border-[#cdd9e4]">
        <div className="flex h-[21px] shrink-0 items-center border-b border-[#96999c] bg-linear-to-b from-[#f6f6f6] to-[#cdd9e4] to-60% pl-[6px]">
          <Icon name="section" />
          <Menu items={menus} className="pl-[2px]" />
        </div>
        <div className="shrink-0 border-b border-[#96999c]">
          {toolbars.map((bars, i) => (
            <div key={i} className={clsx('flex', i === 3 && '-mb-px')}>
              {bars.map((items) => <Toolbar key={items} items={items} />)}
              {i === 2 && <Toolbar items="dither dither dither" className="ml-auto w-[65px]" />}
            </div>
          ))}
        </div>
        <main className="flex min-h-0 flex-1">
          <ProjectPanel />
          <LadderSection />
        </main>
        <StatusBar />
      </div>
      <IoWindow />
      <ConfirmDialog />
      <Watermark />
      <Arrows />
    </div>
  );
}
